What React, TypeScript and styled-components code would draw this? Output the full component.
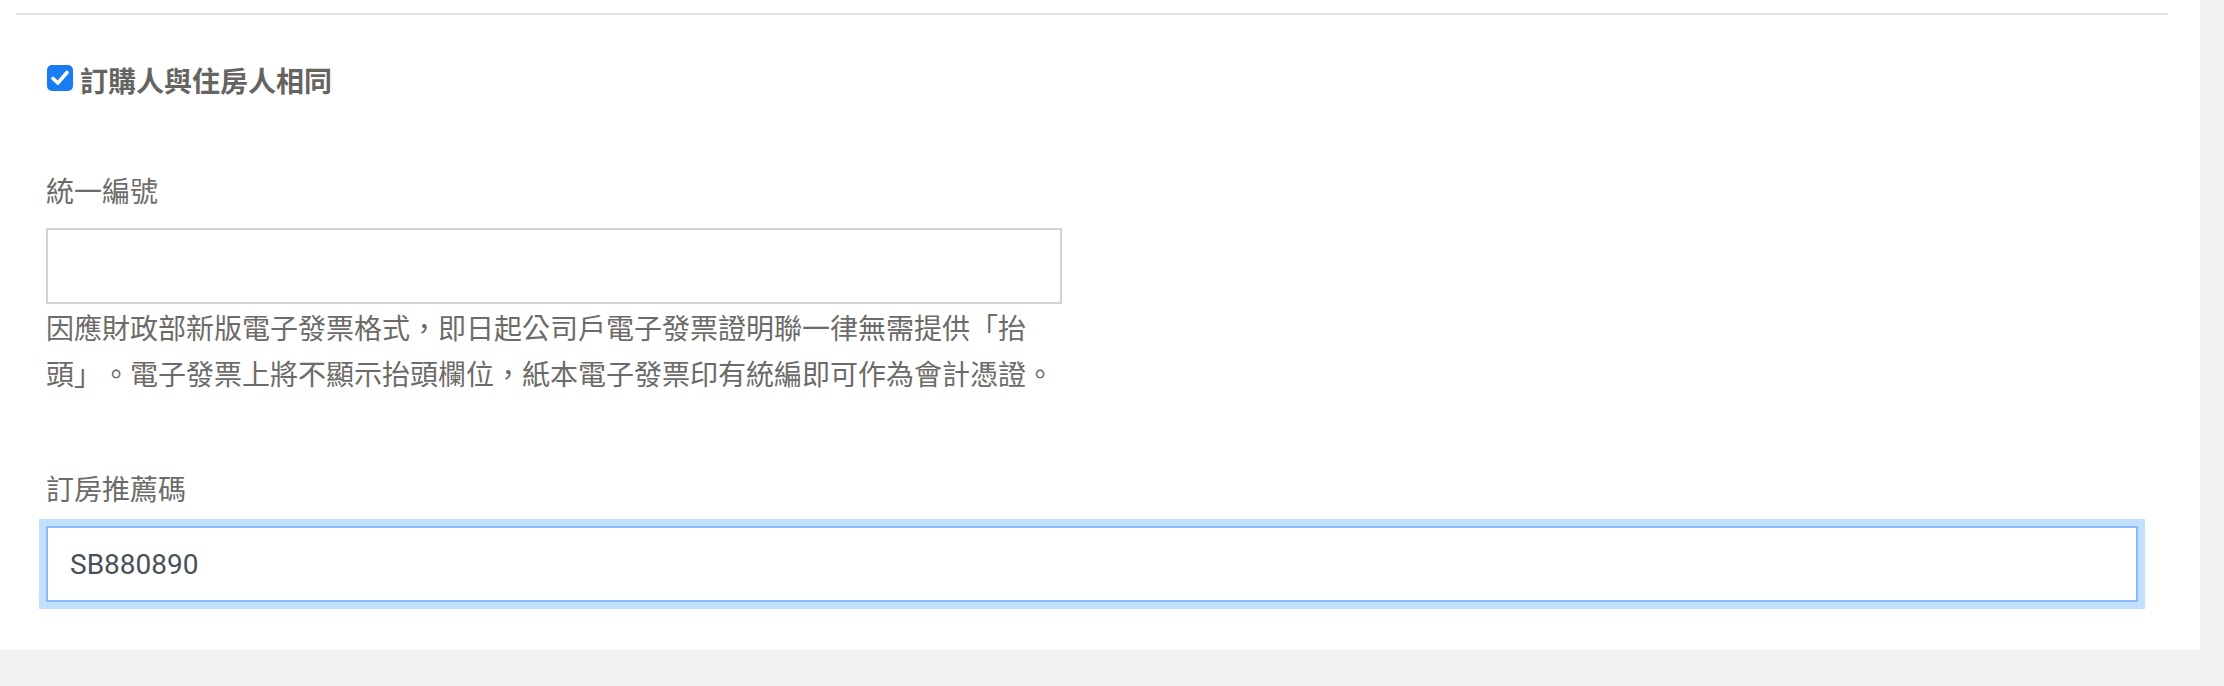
import React from 'react';
import styled, {createGlobalStyle} from 'styled-components';

const GlobalStyle = createGlobalStyle`
  body {
    margin: 0;
    background: #f2f2f2;
    font-family: "Noto Sans CJK TC", "Noto Sans", sans-serif;
    text-spacing-trim: space-all;
  }
`;

const App = () => {
  return (
    <>
      <GlobalStyle />
      <Panel>
        <Inner>
          <Divider />
          <Form>
            <CheckRow>
              <CheckBox>
                <svg width="26" height="26" viewBox="0 0 26 26">
                  <path d="M6 13.5 L10.8 18 L20 7.5" fill="none" stroke="#fff" strokeWidth="3.6" strokeLinecap="round" strokeLinejoin="round" />
                </svg>
              </CheckBox>
              <CheckLabel>訂購人與住房人相同</CheckLabel>
            </CheckRow>

            <Field $gap={68}>
              <Label>統一編號</Label>
              <Input $width={1016} defaultValue="" />
              <Note>
                因應財政部新版電子發票格式，即日起公司戶電子發票證明聯一律無需提供「抬頭」。電子發票上將不顯示抬頭欄位，紙本電子發票印有統編即可作為會計憑證。
              </Note>
            </Field>

            <Field $gap={71}>
              <Label>訂房推薦碼</Label>
              <Input $focused defaultValue="SB880890" />
            </Field>
          </Form>
        </Inner>
      </Panel>
    </>
  );
};

const Panel = styled.div`
  width: 2200px;
  background: #ffffff;
  padding-bottom: 48px;
`;

const Inner = styled.div`
  padding: 13px 32px 0 16px;
`;

const Divider = styled.div`
  height: 2px;
  background: #e3e3e3;
`;

const Form = styled.div`
  padding: 0 30px;
`;

const CheckRow = styled.label`
  display: flex;
  align-items: center;
  gap: 7px;
  height: 42px;
  margin-top: 44px;
  margin-left: 1px;
`;

const CheckBox = styled.span`
  display: flex;
  align-items: center;
  justify-content: center;
  width: 26px;
  height: 26px;
  border-radius: 5px;
  background: #1a7cf3;
  margin-top: -4px;
`;

const CheckLabel = styled.span`
  font-size: 28px;
  font-weight: 700;
  color: #666461;
  line-height: 42px;
`;

const Field = styled.div<{$gap: number}>`
  display: flex;
  flex-direction: column;
  align-items: flex-start;
  margin-top: ${({$gap}) => $gap}px;
`;

const Label = styled.div`
  font-size: 28px;
  line-height: 42px;
  color: #6d6b68;
  margin-bottom: 17px;
`;

const Input = styled.input<{$width?: number; $focused?: boolean}>`
  box-sizing: border-box;
  width: ${({$width}) => ($width ? `${$width}px` : '100%')};
  height: 76px;
  padding: 0 22px;
  border: 2px solid ${({$focused}) => ($focused ? '#86bcf9' : '#ced3d8')};
  box-shadow: ${({$focused}) => ($focused ? '0 0 0 7px rgba(0, 123, 255, 0.23)' : 'none')};
  border-radius: 0;
  background: #fff;
  font-family: Roboto, "Noto Sans", sans-serif;
  font-size: 28px;
  color: #495057;
  outline: none;
`;

const Note = styled.p`
  width: 1016px;
  margin: 0;
  font-size: 28px;
  line-height: 46px;
  color: #6d6b68;
`;

export default App;
